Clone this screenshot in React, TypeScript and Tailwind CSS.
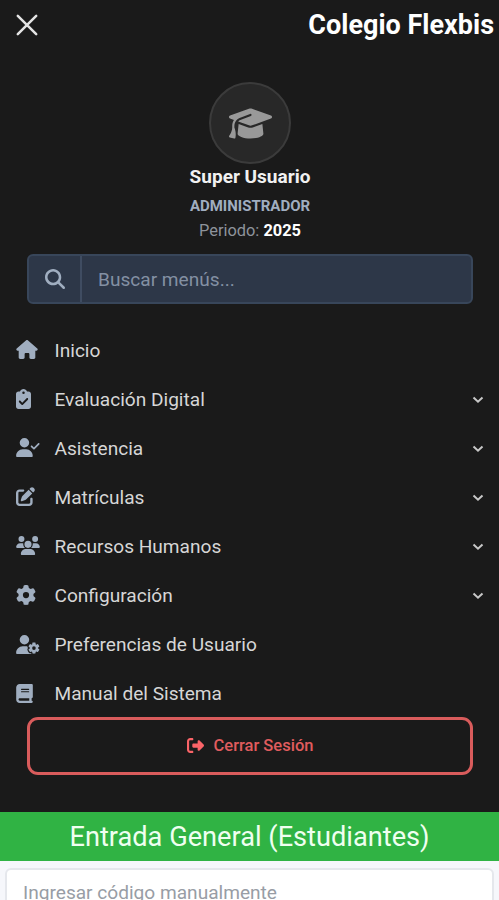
import React from "react";
import {
  FaBook,
  FaClipboardCheck,
  FaGear,
  FaGraduationCap,
  FaHouse,
  FaMagnifyingGlass,
  FaPenToSquare,
  FaRightFromBracket,
  FaUserCheck,
  FaUserGear,
  FaUsers,
} from "react-icons/fa6";
import type { IconType } from "react-icons";

type Item = { label: string; icon: IconType; size: string; sub?: boolean };

const items: Item[] = [
  { label: "Inicio", icon: FaHouse, size: "w-[22px] h-[19px]" },
  { label: "Evaluación Digital", icon: FaClipboardCheck, size: "w-[15px] h-5", sub: true },
  { label: "Asistencia", icon: FaUserCheck, size: "w-6 h-[19px]", sub: true },
  { label: "Matrículas", icon: FaPenToSquare, size: "w-[19px] h-[19px]", sub: true },
  { label: "Recursos Humanos", icon: FaUsers, size: "w-6 h-[19px]", sub: true },
  { label: "Configuración", icon: FaGear, size: "w-5 h-5", sub: true },
  { label: "Preferencias de Usuario", icon: FaUserGear, size: "w-6 h-[19px]" },
  { label: "Manual del Sistema", icon: FaBook, size: "w-[17px] h-[19px]" },
];

function Chevron() {
  return (
    <svg viewBox="0 0 12 8" className="h-2 w-3" fill="none" stroke="#c8c8c8" strokeWidth="2">
      <path d="M1.5 1.5 6 5.7l4.5-4.2" />
    </svg>
  );
}

export default function App() {
  return (
    <div className="flex h-[900px] w-[499px] flex-col overflow-hidden bg-[#f6f7fb] font-[Roboto,sans-serif]">
      <aside className="flex h-[812px] shrink-0 flex-col bg-[#1a1a1a]">
        <header className="flex h-[50px] items-center justify-between pl-4 pr-[5px]">
          <svg viewBox="0 0 22 22" className="h-[22px] w-[22px]" fill="none" stroke="#e4e4e4" strokeWidth="2.5" strokeLinecap="round">
            <path d="m1.8 1.8 18.4 18.4M20.2 1.8 1.8 20.2" />
          </svg>
          <h1 className="whitespace-nowrap text-[27px] font-bold leading-[50px] text-white">Colegio Flexbis</h1>
        </header>
        <div className="mt-8 flex flex-col items-center pl-px">
          <div className="flex h-[82px] w-[82px] items-center justify-center rounded-full border-2 border-[#3b3b3b] bg-[#282828]">
            <FaGraduationCap className="h-[35px] w-[43px] text-[#999999]" />
          </div>
          <div className="mt-0.5 whitespace-nowrap text-[19px] font-bold leading-[22px] text-[#f1f1f1]">Super Usuario</div>
          <div className="mt-2 whitespace-nowrap text-[15px] font-bold leading-5 text-[#a0aec0]">ADMINISTRADOR</div>
          <div className="mt-[5px] whitespace-nowrap text-[16.4px] leading-5 text-[#8e939b]">
            Periodo: <b className="text-white">2025</b>
          </div>
        </div>
        <div className="ml-[27px] mr-[26px] mt-[13px] flex h-[50px] shrink-0 rounded-[6px] border-2 border-[#38465a] bg-[#2d3748]">
          <div className="flex w-[53px] items-center justify-center border-r-2 border-[#3f4c61]">
            <FaMagnifyingGlass className="h-5 w-5 text-[#a0aec0]" />
          </div>
          <div className="pl-4 text-[19.1px] leading-[47px] text-[#8390a3]">Buscar menús...</div>
        </div>
        <nav className="mt-[21px] flex flex-col">
          {items.map(({ label, icon: Icon, size, sub }) => (
            <div key={label} className="flex h-[49.1px] items-center pl-4 pr-[15px]">
              <div className="flex w-[38.5px] shrink-0">
                <Icon className={`${size} text-[#a0aec0]`} />
              </div>
              <span className="whitespace-nowrap pt-0.5 text-[19.1px] leading-6 text-[#d6d6d6]">{label}</span>
              {sub && <span className="ml-auto mt-0.5"><Chevron /></span>}
            </div>
          ))}
        </nav>
        <button className="ml-[27px] mr-[26px] mt-[-1px] flex h-[58px] shrink-0 items-center justify-center gap-[10px] rounded-[11px] border-[3px] border-[#d95c5c] text-[16.5px] font-medium text-[#e05c5e]">
          <FaRightFromBracket className="h-[17px] w-[17px] text-[#fa6468]" />
          <span className="whitespace-nowrap pt-0.5">Cerrar Sesión</span>
        </button>
      </aside>
      <main className="flex flex-col">
        <h2 className="h-[49px] bg-[#30b344] text-center text-[27.2px] leading-[51px] text-[#effff0]">Entrada General (Estudiantes)</h2>
        <div className="mx-[5px] mt-[7px] h-[49px] rounded-[6px] border-2 border-[#e5e7ec] bg-white pl-4 text-[19.1px] leading-[45px] text-[#989da5]">
          Ingresar código manualmente
        </div>
      </main>
    </div>
  );
}
